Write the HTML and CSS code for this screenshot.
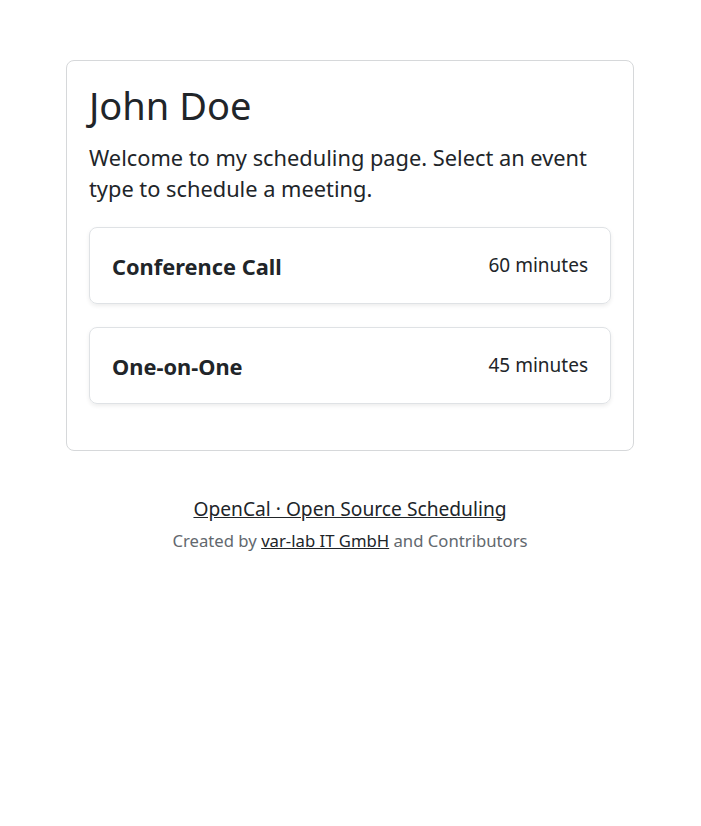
FILE: index.html
```html
<!DOCTYPE html>
<html lang="en">
<head>
<meta charset="utf-8">
<title>John Doe</title>
<link rel="stylesheet" href="styles.css">
</head>
<body>
<main class="page">
  <section class="profile">
    <h1 class="name">John Doe</h1>
    <p class="lead">Welcome to my scheduling page. Select an event type to schedule a meeting.</p>
    <div class="events">
      <a class="event" href="#">
        <span class="event-title">Conference Call</span>
        <span class="event-duration">60 minutes</span>
      </a>
      <a class="event" href="#">
        <span class="event-title">One-on-One</span>
        <span class="event-duration">45 minutes</span>
      </a>
    </div>
  </section>
  <footer class="footer">
    <a class="brand" href="#">OpenCal · Open Source Scheduling</a>
    <p class="credits">Created by <a href="#">var-lab IT GmbH</a> and Contributors</p>
  </footer>
</main>
</body>
</html>
```

FILE: styles.css
```css
* { box-sizing: border-box; }
html, body { margin: 0; padding: 0; background: #fff; }
body {
  padding-right: 1px;
  font-family: "Noto Sans", "DejaVu Sans", sans-serif;
  color: #212529;
  font-size: 16px;
  line-height: 1.5;
}
.page {
  width: 568px;
  margin: 60px auto 0;
}
.profile {
  border: 1px solid #d6d8da;
  border-radius: 8px;
  padding: 22px 22px 46px;
}
.name {
  margin: 0 0 13px;
  font-size: 38px;
  font-weight: 400;
  line-height: 1.2;
}
.lead {
  margin: 0 0 23px;
  font-size: 21.8px;
  line-height: 31px;
}
.events {
  display: flex;
  flex-direction: column;
  gap: 23px;
}
.event {
  display: flex;
  justify-content: space-between;
  align-items: center;
  height: 77px;
  padding: 0 22px;
  border: 1px solid #dfe2e5;
  border-radius: 8px;
  box-shadow: 0 2px 4px rgba(0,0,0,0.075);
  color: #212529;
  text-decoration: none;
}
.event-title {
  margin-top: 3px;
  font-size: 21.8px;
  font-weight: 700;
  line-height: 1.2;
}
.event-duration {
  align-self: flex-start;
  margin-top: 26px;
  font-size: 19px;
  line-height: 1.2;
}
.footer {
  text-align: center;
  margin-top: 44px;
}
.brand {
  font-size: 19.2px;
  line-height: 28.5px;
  color: #212529;
  text-decoration: underline;
}
.credits {
  margin: 5px 0 0;
  font-size: 16.7px;
  line-height: 25px;
  color: #62686e;
}
.credits a { color: #212529; }
```
